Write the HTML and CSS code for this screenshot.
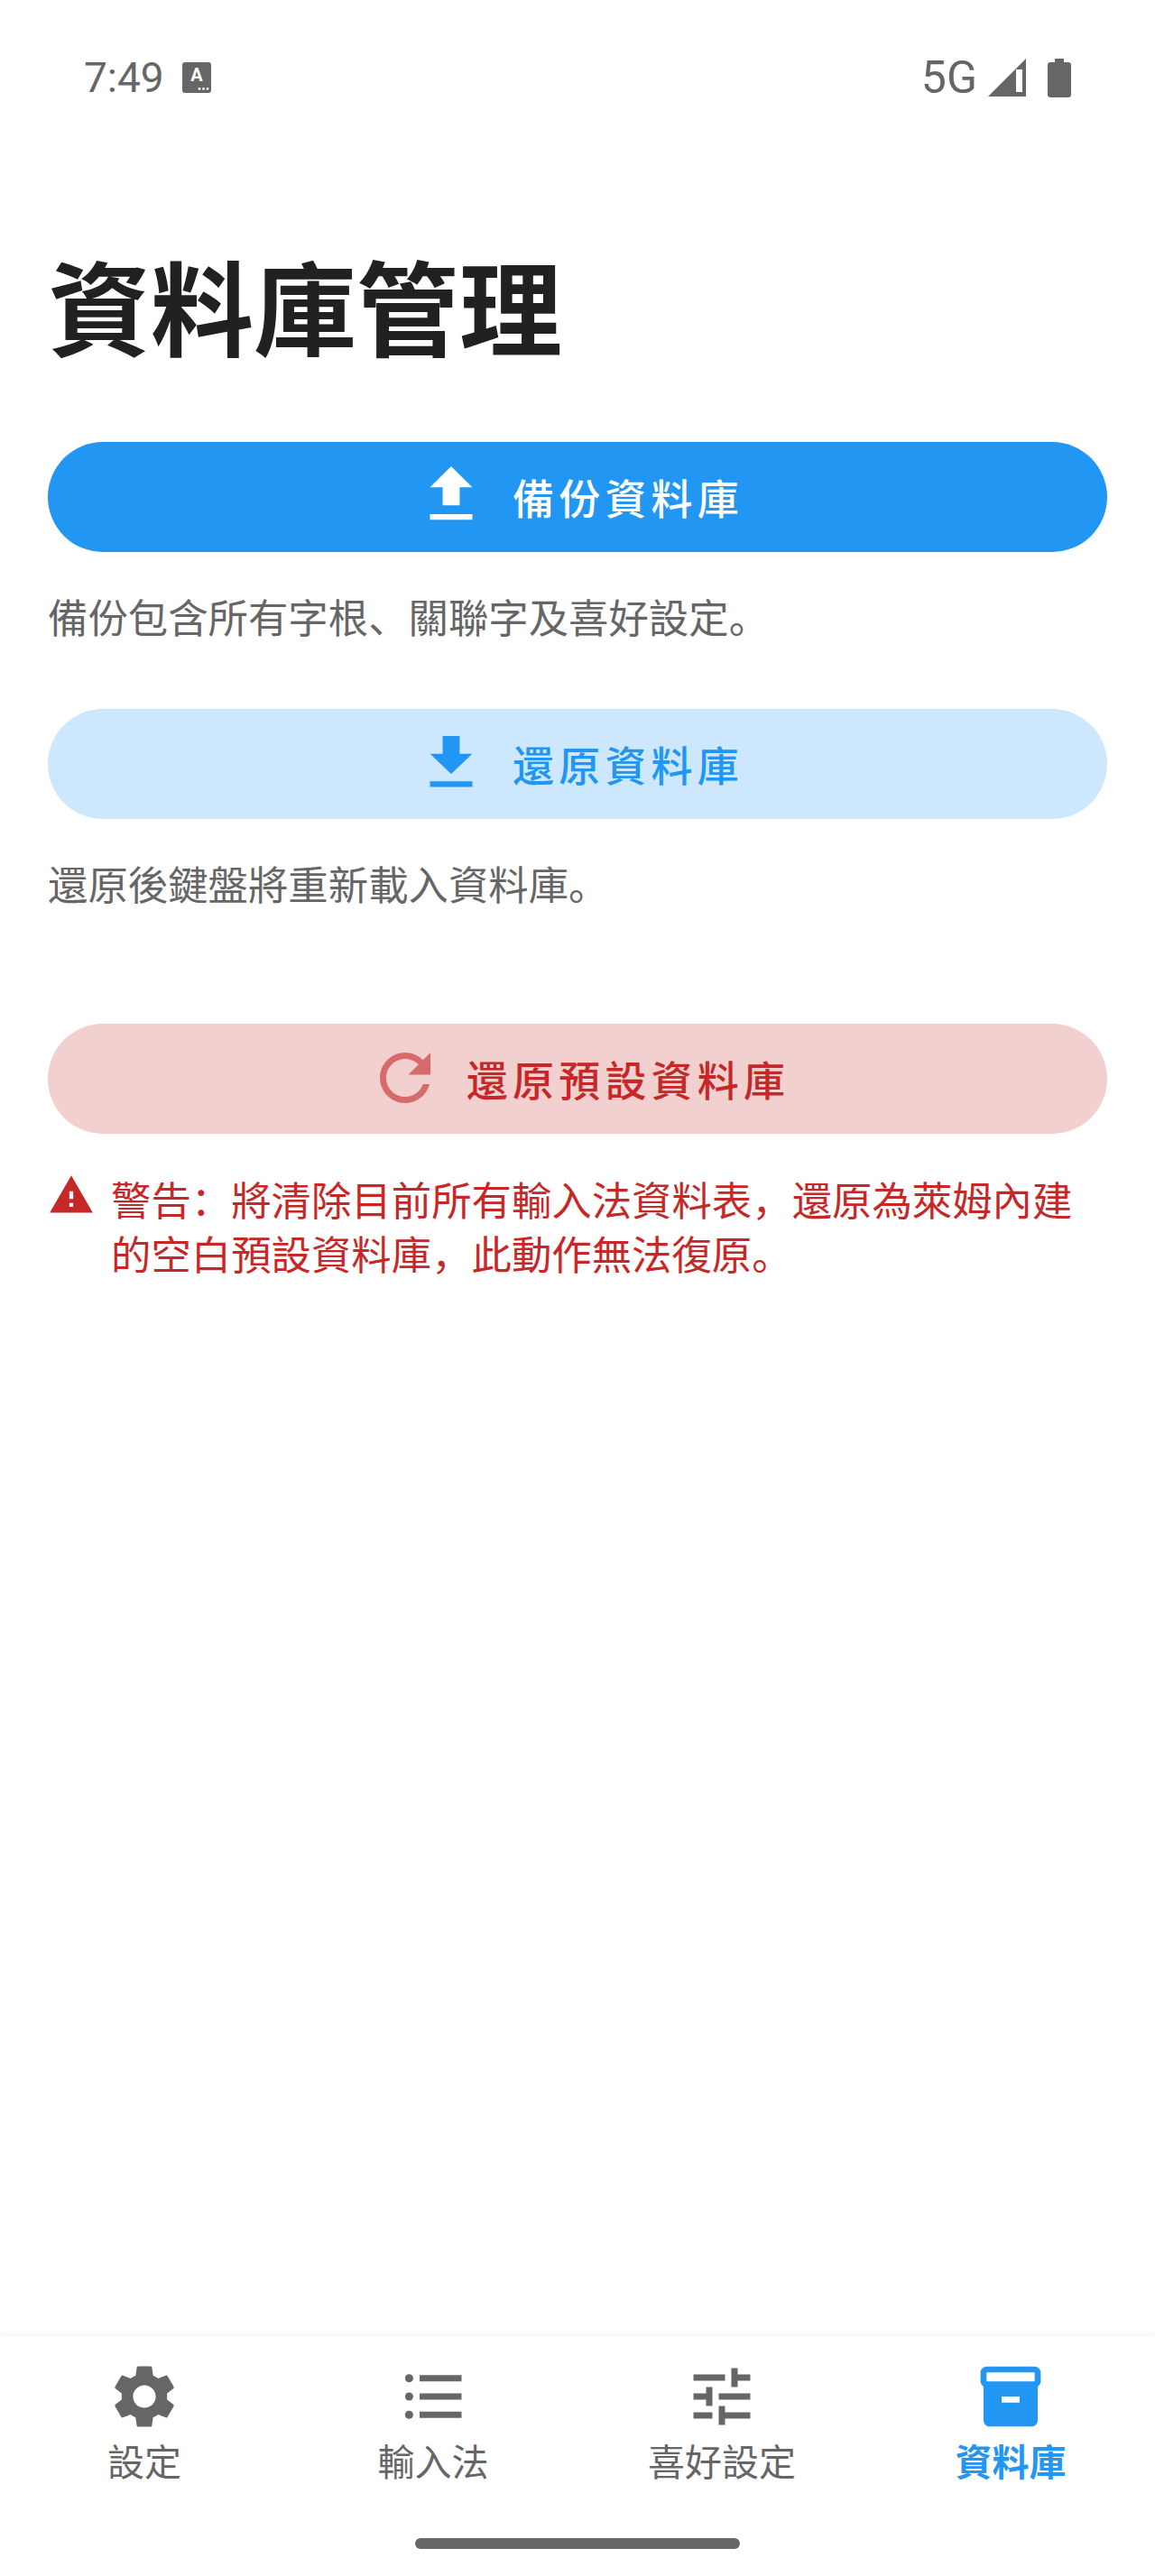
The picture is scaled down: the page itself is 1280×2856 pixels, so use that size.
FILE: index.html
```html
<!DOCTYPE html>
<html lang="en">
  <head>
    <meta charset="utf-8" />
    <meta name="viewport" content="width=device-width, initial-scale=1" />
    <title>資料庫管理</title>
    <link rel="stylesheet" href="styles.css">
  </head>
  <body>
    <div class="screen">
      <!-- status bar -->
      <div class="status">
        <div class="status-left">
          <span class="clock">7:49</span>
          <svg class="ime" viewBox="0 0 32 34">
            <rect width="32" height="34" rx="3" fill="#666"/>
            <text x="16" y="21" text-anchor="middle" class="ime-letter">A</text>
            <circle cx="19" cy="29.5" r="1.4" fill="#fff"/>
            <circle cx="23.5" cy="29.5" r="1.4" fill="#fff"/>
            <circle cx="28" cy="29.5" r="1.4" fill="#fff"/>
          </svg>
        </div>
        <div class="status-right">
          <span class="net">5G</span>
          <svg class="signal" viewBox="0 0 42 42">
            <path fill-rule="evenodd" d="M42 0V42H0ZM31 12V37H38V12Z" fill="#666"/>
          </svg>
          <svg class="battery" viewBox="0 0 26 43">
            <path d="M8 0H18V4H23C24.7 4 26 5.3 26 7V40C26 41.7 24.7 43 23 43H3C1.3 43 0 41.7 0 40V7C0 5.3 1.3 4 3 4H8Z" fill="#666"/>
          </svg>
        </div>
      </div>

      <div class="content">
        <h1>資料庫管理</h1>

        <button class="btn btn-primary">
          <svg viewBox="0 0 24 24"><path d="M9.3 14.9h5.4V9.2h4L12 2.6 5.3 9.2h4zM5.3 17.7h13.4v1.8H5.3z"/></svg>
          <span>備份資料庫</span>
        </button>
        <p class="hint">備份包含所有字根、關聯字及喜好設定。</p>

        <button class="btn btn-tonal">
          <svg viewBox="0 0 24 24"><path d="M9.3 3.4h5.4v5.7h4L12 15.4 5.3 9.1h4zM5.3 17.8h13.4v1.8H5.3z"/></svg>
          <span>還原資料庫</span>
        </button>
        <p class="hint">還原後鍵盤將重新載入資料庫。</p>

        <button class="btn btn-danger">
          <svg viewBox="0 0 24 24"><path d="M17.65 6.35C16.2 4.9 14.21 4 12 4c-4.42 0-7.99 3.58-7.99 8s3.57 8 7.99 8c3.73 0 6.84-2.55 7.73-6h-2.08c-.82 2.33-3.04 4-5.65 4-3.31 0-6-2.69-6-6s2.69-6 6-6c1.66 0 3.14.69 4.22 1.78L13 11h7V4l-2.35 2.35z"/></svg>
          <span>還原預設資料庫</span>
        </button>
        <div class="warning">
          <svg viewBox="0 0 24 24"><path d="M1 21h22L12 2 1 21zm12-3h-2v-2h2v2zm0-4h-2v-4h2v4z"/></svg>
          <p>警告&#xFF1A;將清除目前所有輸入法資料表&#xFF0C;還原為萊姆內建的空白預設資料庫&#xFF0C;此動作無法復原。</p>
        </div>
      </div>

      <!-- bottom navigation -->
      <nav class="nav">
        <div class="tabs">
          <div class="tab">
            <svg viewBox="0 0 24 24"><path d="M19.14 12.94c.04-.3.06-.61.06-.94 0-.32-.02-.64-.07-.94l2.03-1.58c.18-.14.23-.41.12-.61l-1.92-3.32c-.12-.22-.37-.29-.59-.22l-2.39.96c-.5-.38-1.03-.7-1.62-.94l-.36-2.54c-.04-.24-.24-.41-.48-.41h-3.84c-.24 0-.43.17-.47.41l-.36 2.54c-.59.24-1.13.57-1.62.94l-2.39-.96c-.22-.08-.47 0-.59.22L2.74 8.87c-.12.21-.08.47.12.61l2.03 1.58c-.05.3-.09.63-.09.94s.02.64.07.94l-2.03 1.58c-.18.14-.23.41-.12.61l1.92 3.32c.12.22.37.29.59.22l2.39-.96c.5.38 1.03.7 1.62.94l.36 2.54c.05.24.24.41.48.41h3.84c.24 0 .44-.17.47-.41l.36-2.54c.59-.24 1.13-.56 1.62-.94l2.39.96c.22.08.47 0 .59-.22l1.92-3.32c.12-.22.07-.47-.12-.61l-2.01-1.58zM12 15.6c-1.98 0-3.6-1.62-3.6-3.6s1.62-3.6 3.6-3.6 3.6 1.62 3.6 3.6-1.62 3.6-3.6 3.6z"/></svg>
            <span>設定</span>
          </div>
          <div class="tab">
            <svg viewBox="0 0 24 24">
              <circle cx="4.4" cy="6.2" r="1.3"/>
              <circle cx="4.4" cy="12" r="1.3"/>
              <circle cx="4.4" cy="17.8" r="1.3"/>
              <path d="M7.7 5.2h13.3v2H7.7zM7.7 11h13.3v2H7.7zM7.7 16.8h13.3v2H7.7z"/>
            </svg>
            <span>輸入法</span>
          </div>
          <div class="tab">
            <svg viewBox="0 0 24 24"><path d="M3 17v2h6v-2H3zM3 5v2h10V5H3zm10 16v-2h8v-2h-8v-2h-2v6h2zM7 9v2H3v2h4v2h2V9H7zm14 4v-2H11v2h10zm-6-4h2V7h4V5h-4V3h-2v6z"/></svg>
            <span>喜好設定</span>
          </div>
          <div class="tab tab-active">
            <svg viewBox="0 0 24 24"><path d="M20 2H4c-1 0-2 .9-2 2v3.01c0 .72.43 1.34 1 1.69V20c0 1.1 1.1 2 2 2h14c.9 0 2-.9 2-2V8.7c.57-.35 1-.97 1-1.69V4c0-1.1-1-2-2-2zm-5 12H9v-2h6v2zm5-7H4V4l16-.01V7z"/></svg>
            <span>資料庫</span>
          </div>
        </div>
        <div class="home-bar"></div>
      </nav>
    </div>
  </body>
</html>
```

FILE: styles.css
```css
*{
  box-sizing: border-box;
}

body{
  margin: 0;
  background-color: #fff;
  font-family: "Noto Sans CJK SC", "Noto Sans", sans-serif;
}

.screen{
  height: 2856px;
  display: flex;
  flex-direction: column;
}

/* status bar */
.status{
  height: 172px;
  padding: 0 93px;
  display: flex;
  justify-content: space-between;
  align-items: center;
  color: #666;
}

.status-left, .status-right{
  display: flex;
  align-items: center;
}

.clock{
  font-family: Roboto, sans-serif;
  font-size: 46px;
  font-weight: 400;
  line-height: 56px;
}

.ime{
  width: 32px;
  height: 34px;
  margin-left: 20px;
}

.ime-letter{
  font-family: Roboto, sans-serif;
  font-size: 20px;
  font-weight: 700;
  fill: #fff;
}

.net{
  font-family: Roboto, sans-serif;
  font-size: 50px;
  line-height: 56px;
}

.signal{
  width: 42px;
  height: 42px;
  margin-left: 12px;
}

.battery{
  width: 26px;
  height: 43px;
  margin-left: 24px;
}

/* page body */
.content{
  flex: 1;
  padding: 95px 53px 0;
}

h1{
  margin: 0 0 83px;
  font-size: 114px;
  font-weight: 700;
  line-height: 140px;
  color: #212121;
}

.btn{
  width: 100%;
  height: 122px;
  padding: 0 0 2px 2px;
  border: none;
  border-radius: 61px;
  display: flex;
  justify-content: center;
  align-items: center;
  gap: 26px;
  font-family: inherit;
  font-size: 46px;
  font-weight: 500;
  letter-spacing: 5.2px;
}

.btn svg{
  width: 84px;
  height: 84px;
  fill: currentColor;
}

.btn-primary{
  background-color: #2196f3;
  color: #fff;
}

.btn-tonal{
  background-color: #cde8fc;
  color: #2196f3;
}

.btn-danger{
  margin-top: 126px;
  background-color: #f2d0d0;
  color: #c62828;
}

.btn-danger svg{
  opacity: 0.6;
}

.hint{
  margin: 41px 0 73px;
  font-size: 44.4px;
  line-height: 60px;
  color: #666;
}

.warning{
  margin-top: 42px;
  display: flex;
  gap: 18px;
  color: #c62828;
}

.warning svg{
  width: 52px;
  height: 52px;
  flex-shrink: 0;
  fill: currentColor;
}

.warning p{
  margin: 0;
  font-size: 44.4px;
  line-height: 60px;
}

/* bottom navigation */
.nav{
  height: 266px;
  background-color: #fff;
  box-shadow: 0 -2px 6px rgba(0, 0, 0, 0.05);
}

.tabs{
  display: flex;
  padding-top: 25px;
}

.tab{
  flex: 1;
  display: flex;
  flex-direction: column;
  align-items: center;
  color: #666;
  font-size: 41px;
  line-height: 56px;
}

.tab svg{
  width: 84px;
  height: 84px;
  fill: currentColor;
}

.tab-active{
  color: #2196f3;
  font-weight: 700;
}

.tab-active svg{
  padding: 2px;
}

.home-bar{
  width: 360px;
  height: 12px;
  margin: 59px auto 0;
  border-radius: 6px;
  background-color: #666;
}
```
